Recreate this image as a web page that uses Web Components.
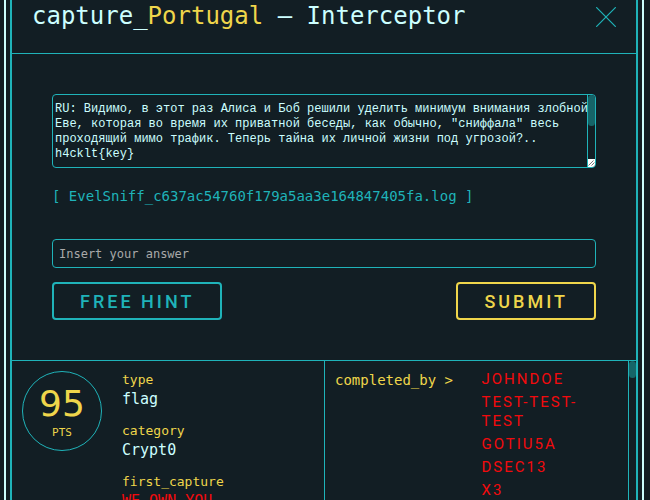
<!DOCTYPE html>
<html lang="en">
<head>
<meta charset="utf-8">
<title>capture_Portugal – Interceptor</title>
<style>
:root{--bg:#121e24;--teal:#1fb3b9;--thumb:#166468;--pale:#cff;--yellow:#efd64b;--red:#f20a0d;
--mono:"DejaVu Sans Mono","Liberation Mono",monospace;--courier:"Liberation Mono","DejaVu Sans Mono",monospace;--tech:Roboto,"Liberation Sans",sans-serif}
body{margin:0;background:var(--bg);color:var(--pale);font-family:var(--mono);height:100vh;overflow:hidden}
b{font-weight:400;color:var(--yellow)}
</style>
</head>
<body>
<capture-dialog>
  <span slot="title">capture_<b>Portugal</b> – Interceptor</span>
  <challenge-form file="EvelSniff_c637ac54760f179a5aa3e164847405fa.log"></challenge-form>
  <challenge-details>
    <points-badge slot="badge" value="95"></points-badge>
    <info-item label="type">flag</info-item>
    <info-item label="category">Crypt0</info-item>
    <info-item label="first_capture" team>we own you</info-item>
    <completed-list slot="teams">
      <team-name>johndoe</team-name>
      <team-name>test-test-test</team-name>
      <team-name>gotiu5a</team-name>
      <team-name>dsec13</team-name>
      <team-name>x3</team-name>
    </completed-list>
  </challenge-details>
</capture-dialog>
<script>
function define(name, render) {
  customElements.define(name, class extends HTMLElement {
    constructor() {
      super();
      this.attachShadow({mode: 'open'});
    }
    connectedCallback() {
      this.shadowRoot.innerHTML = '<style>*{box-sizing:border-box}</style>' + render(this);
    }
  });
}

define('capture-dialog', () => `
<style>
:host{display:block;box-sizing:border-box;height:100vh;overflow:hidden;padding:0 6px 0 4px}
.outer{height:100%;border:solid var(--pale);border-width:0 2px;padding:0 4px}
.inner{height:100%;border:solid var(--teal);border-width:0 2px;display:flex;flex-direction:column}
header{display:flex;justify-content:space-between;align-items:flex-start;height:54px;flex:none;padding:0 20px;border-bottom:1px solid var(--teal)}
h1{margin:0;font-size:24px;line-height:32px;font-weight:400;white-space:pre}
button{background:none;border:0;padding:7px 0 0;line-height:0;color:var(--teal)}
</style>
<div class="outer"><section class="inner">
<header><h1><slot name="title"></slot></h1>
<button aria-label="Close"><svg width="20" height="20" viewBox="0 0 20 20" fill="none" stroke="currentColor" stroke-width="1.2"><path d="M.2.2 19.8 19.8M19.8.2.2 19.8"/></svg></button></header>
<slot></slot>
</section></div>`);

define('scroll-rail', () => `
<style>
:host{display:flex;flex-direction:column;justify-content:space-between;box-sizing:border-box;flex:none;width:8px;border-left:1px solid var(--teal)}
.thumb{height:var(--thumb-height);background:var(--thumb);border-radius:4px}
</style><div class="thumb"></div><slot></slot>`);

define('challenge-form', el => `
<style>
:host{display:block;padding:40px;flex:none}
form{display:flex;flex-direction:column}
.box{display:flex;height:74px;border:1px solid var(--teal);border-radius:4px;overflow:hidden}
textarea{flex:1;min-width:0;resize:none;border:0;outline:0;background:none;color:inherit;padding:7px 0 0 2px;font:12px/15px var(--courier);white-space:pre;overflow:hidden;scrollbar-width:none}
scroll-rail{--thumb-height:31px}
.grip{display:block;background:#fff}
a{align-self:flex-start;margin:20px 0 34px;font-size:14px;line-height:17px;color:var(--teal);text-decoration:none;white-space:pre}
input{height:29px;width:100%;border:1px solid var(--teal);border-radius:4px;background:none;color:inherit;padding:0 6px;font:12px var(--mono);outline:0}
input::placeholder{color:#a9a9a9;opacity:1}
.actions{display:flex;justify-content:space-between;margin-top:14px}
button{height:38px;padding:0 26px;border:2px solid;border-radius:4px;background:none;color:var(--teal);font:500 18px var(--tech);letter-spacing:3px;text-transform:uppercase}
.submit{color:var(--yellow)}
</style>
<form>
<div class="box"><textarea aria-label="Description" readonly>RU: Видимо, в этот раз Алиса и Боб решили уделить минимум внимания злобной
Еве, которая во время их приватной беседы, как обычно, "сниффала" весь
проходящий мимо трафик. Теперь тайна их личной жизни под угрозой?..
h4cklt{key}</textarea>
<scroll-rail><svg class="grip" width="7" height="8" viewBox="0 0 7 8" stroke="#555" stroke-width=".8"><path d="M.5 6.500 5.500 1.500M3.500 6.500 6.500 3.500"/></svg></scroll-rail></div>
<a href="#log">[ ${el.getAttribute('file')} ]</a>
<input type="text" aria-label="Answer" placeholder="Insert your answer">
<div class="actions"><button type="button">Free hint</button><button class="submit" type="button">Submit</button></div>
</form>`);

define('challenge-details', () => `
<style>
:host{display:grid;grid-template-columns:1fr 1fr;flex:1;min-height:0;border-top:1px solid var(--teal)}
.left{display:flex;gap:20px;padding:10px;overflow:hidden}
.info{display:flex;flex-direction:column;gap:13px}
.right{display:flex;border-left:1px solid var(--teal);overflow:hidden}
scroll-rail{--thumb-height:17px}
slot[name=teams]{display:block;flex:1}
</style>
<div class="left"><slot name="badge"></slot><div class="info"><slot></slot></div></div>
<div class="right"><slot name="teams"></slot><scroll-rail></scroll-rail></div>`);

define('points-badge', el => `
<style>
:host{display:flex;flex-direction:column;align-items:center;box-sizing:border-box;flex:none;width:80px;height:80px;padding-top:12px;border:1px solid var(--teal);border-radius:50%;color:var(--yellow)}
.value{font:36px/40px "DejaVu Sans",sans-serif}
.unit{font:11px/18px var(--mono)}
</style><span class="value">${el.getAttribute('value')}</span><span class="unit">PTS</span>`);

define('info-item', el => `
<style>
:host{display:block;flex:none}
.label{font-size:13px;line-height:18px;color:var(--yellow)}
.value{font-size:15px;line-height:20px}
:host([team]) .value{text-transform:uppercase;color:var(--red)}
</style><div class="label">${el.getAttribute('label')}</div><div class="value"><slot></slot></div>`);

define('completed-list', () => `
<style>
:host{display:grid;grid-template-columns:1fr 1fr;flex:1;padding:9px 0 0 10px}
.label{font-size:14px;line-height:20px;color:var(--yellow)}
.names{display:flex;flex-direction:column;gap:4px;padding-right:20px}
</style><div class="label">completed_by &gt;</div><div class="names"><slot></slot></div>`);

define('team-name', () => `
<style>:host{display:block;font:15px/19px var(--tech);letter-spacing:2px;text-transform:uppercase;color:var(--red)}</style><slot></slot>`);
</script>
</body>
</html>
